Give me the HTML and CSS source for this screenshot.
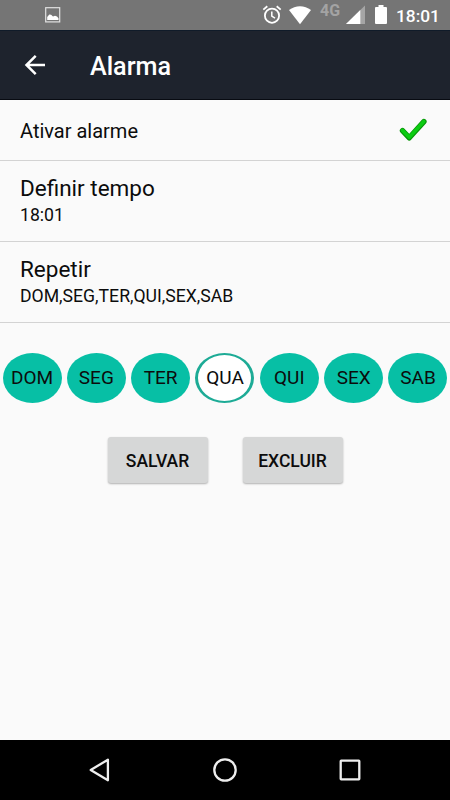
FILE: index.html
```html
<!DOCTYPE html>
<html lang="pt">
<head>
<meta charset="utf-8">
<title>Alarma</title>
<link rel="stylesheet" href="styles.css">
</head>
<body>
<header class="status">
  <svg class="photo" width="16" height="16" viewBox="0 0 16 16"><rect x=".7" y=".7" width="14" height="14.2" fill="none" stroke="#e2e2e2" stroke-width="1.2"/><path d="M2.2 13V10l2.1-2.4 1.8.1 1.9 1.800 2-.8 2 .8 1.500 1.800V13z" fill="#fff"/></svg>
  <svg class="clock" width="20" height="20" viewBox="0 0 20 20" fill="none" stroke="#fff"><circle cx="10" cy="10.700" r="7.100" stroke-width="1.800"/><path d="M9.800 6.600v4.600l3.200 2" stroke-width="1.500"/><path d="M1.300 4.600 5.300 1.200M18.700 4.600l-4-3.400" stroke-width="1.800"/></svg>
  <svg class="wifi" width="22" height="19" viewBox="0 0 22 19"><path d="M0 4.100C6.500-1.200 15.500-1.200 22 4.100L11 18.200z" fill="#fff"/></svg>
  <span class="network">4G</span>
  <svg class="signal" width="20" height="20" viewBox="0 0 20 20"><path d="M19 .5V19H0z" fill="#a5a5a5"/><path d="M14.300 5.100V19H0z" fill="#fff"/></svg>
  <svg class="battery" width="12" height="19" viewBox="0 0 12 19"><path d="M3.500 0h5v2H11q1 0 1 1v15q0 1-1 1H1q-1 0-1-1V3q0-1 1-1h2.500z" fill="#fff"/></svg>
  <span class="time">18:01</span>
</header>
<nav class="appbar">
  <svg width="22" height="22" viewBox="0 0 22 22" fill="none" stroke="#fff" stroke-width="2.500"><path d="M21 11H2.500M11.700 1.900 2.500 11l9.200 9.100"/></svg>
  <h1>Alarma</h1>
</nav>
<main>
  <section class="row enable">
    <span>Ativar alarme</span>
    <svg width="30" height="26" viewBox="0 0 30 26" fill="none" stroke-linecap="round" stroke-linejoin="round"><path d="M4.500 12.600 11.300 19.800 25.900 3.600" stroke="#079407" stroke-width="5.400"/><path d="M4.500 12.400 11.300 19.300 25.800 3.500" stroke="#0ccc12" stroke-width="3.600"/></svg>
  </section>
  <section class="row"><h2>Definir tempo</h2><p>18:01</p></section>
  <section class="row"><h2>Repetir</h2><p>DOM,SEG,TER,QUI,SEX,SAB</p></section>
  <div class="days">
    <span>DOM</span><span>SEG</span><span>TER</span><span class="off">QUA</span><span>QUI</span><span>SEX</span><span>SAB</span>
  </div>
  <div class="actions"><button>SALVAR</button><button>EXCLUIR</button></div>
</main>
<footer class="navbar">
  <svg width="26" height="26" viewBox="0 0 26 26"><path d="M3.700 13 20.900 2.700v20.600z"/></svg>
  <svg width="26" height="26" viewBox="0 0 26 26"><circle cx="13" cy="13" r="10.700"/></svg>
  <svg width="26" height="26" viewBox="0 0 26 26"><rect x="3.700" y="3.700" width="18.600" height="18.600" rx=".5"/></svg>
</footer>
</body>
</html>
```

FILE: styles.css
```css
* { box-sizing: border-box; }
body {
  margin: 0;
  height: 800px;
  display: flex;
  flex-direction: column;
  overflow: hidden;
  background: #fafafa;
  color: #0c0c0c;
  font-family: Roboto, sans-serif;
}
h1, h2, p { margin: 0; }
svg { display: block; flex: none; }
.status {
  height: 30px;
  flex: none;
  display: flex;
  align-items: flex-start;
  padding: 5px 0 0 45px;
  background: #757575;
  color: #fff;
}
.photo { margin-top: 2px; }
.clock { margin-left: 201px; }
.wifi { margin: 1px 0 0 7px; }
.network {
  width: 26px;
  margin-left: 9px;
  color: #a3a3a3;
  font-size: 16px;
  font-weight: 700;
  line-height: 12px;
}
.battery { margin-left: 9px; }
.time {
  margin-left: 9px;
  font-size: 17.300px;
  font-weight: 500;
  line-height: 22px;
}
.appbar {
  height: 70px;
  flex: none;
  display: flex;
  align-items: center;
  padding-left: 24px;
  background: #1e232d;
  border-top: 1px solid #101b29;
  border-bottom: 1px solid #080b12;
  color: #fff;
}
.appbar h1 {
  margin: 3px 0 0 44px;
  font-size: 25.200px;
  font-weight: 500;
  line-height: 30px;
}
main { flex: 1; }
.row {
  height: 81px;
  padding: 13px 20px 0;
  border-bottom: 1px solid #d3d3d3;
}
.enable {
  height: 61px;
  display: flex;
  align-items: center;
  justify-content: space-between;
  padding: 2px 22px 0 20px;
  font-size: 20px;
}
.row h2 {
  font-size: 22.500px;
  font-weight: 400;
  line-height: 28px;
}
.row p {
  font-size: 17.650px;
  line-height: 27px;
}
.days {
  display: flex;
  justify-content: space-between;
  padding: 29.500px 2.500px 0;
}
.days span {
  width: 59px;
  height: 50px;
  display: flex;
  align-items: center;
  justify-content: center;
  border-radius: 50%;
  background: #07bfa5;
  font-size: 19px;
}
.days .off {
  background: #fff;
  border: 3px solid #1dab96;
  border-width: 2px 3px;
}
.actions {
  display: flex;
  justify-content: center;
  gap: 35px;
  padding-top: 34.500px;
}
.actions button {
  width: 100px;
  height: 46px;
  padding: 1px 0 0;
  border: 0;
  border-radius: 3px;
  background: #d6d7d7;
  box-shadow: 0 1px 2px rgba(0, 0, 0, .3);
  color: #0c0c0c;
  font: 500 17.500px Roboto, sans-serif;
}
.navbar {
  height: 60px;
  flex: none;
  display: flex;
  align-items: center;
  justify-content: center;
  gap: 99px;
  background: #000;
}
.navbar svg {
  fill: none;
  stroke: #eee;
  stroke-width: 2.300;
  stroke-linejoin: round;
}
```
